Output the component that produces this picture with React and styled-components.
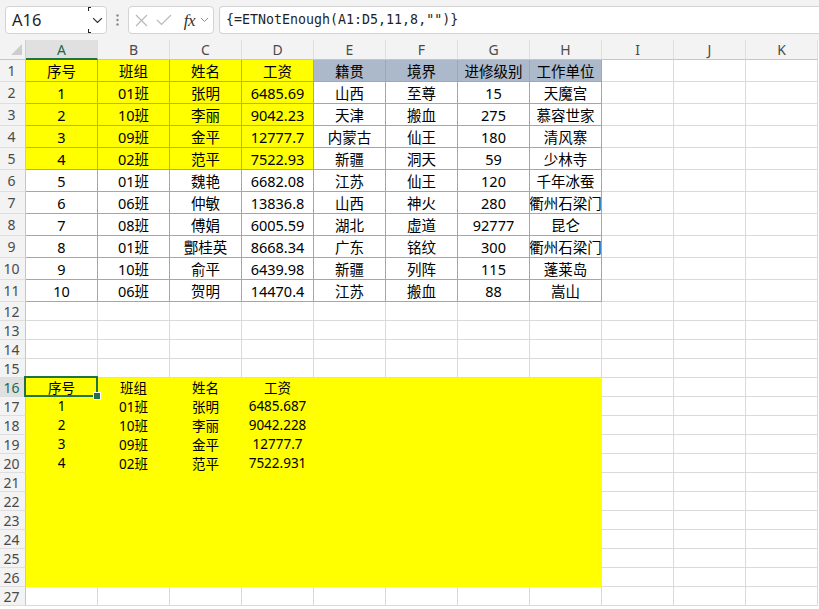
import React from "react";
import styled, { createGlobalStyle } from "styled-components";

const GRID = "#dadada";
const TABLE = "#a6a6a6";
const YELLOW = "#ffff00";
const STEEL = "#acb9ca";
const GREEN = "#217346";

const GlobalStyle = createGlobalStyle`
  html, body {
    margin: 0;
    padding: 0;
    background: #ffffff;
  }
  body {
    font-family: "Noto Sans", "Noto Sans CJK SC", sans-serif;
    overflow: hidden;
  }
`;

const Page = styled.div`
  width: 819px;
  height: 609px;
  overflow: hidden;
  background: #ffffff;
`;

/* ---------- formula bar ---------- */

const Toolbar = styled.div`
  display: flex;
  align-items: flex-start;
  height: 40px;
  box-sizing: border-box;
  padding: 6px 0 0 5px;
  background: #f3f3f3;
`;

const NameBox = styled.div`
  display: flex;
  width: 102px;
  height: 28px;
  box-sizing: border-box;
  border: 1px solid #d3d3d3;
  border-radius: 4px;
  background: #ffffff;
`;

const NameText = styled.div`
  flex: 1;
  padding-left: 6px;
  font-size: 16.5px;
  line-height: 26px;
  color: #1f1f1f;
`;

const DropButton = styled.div`
  position: relative;
  width: 18px;
  display: flex;
  align-items: center;
  justify-content: center;

  &::before,
  &::after {
    content: "";
    position: absolute;
    left: 0;
    width: 2px;
    height: 3px;
    border-left: 1px solid #222;
  }
  &::before {
    top: 0;
    border-top: 1px solid #222;
  }
  &::after {
    bottom: 0;
    border-bottom: 1px solid #222;
  }
`;

const Dots = styled.div`
  width: 21px;
  height: 28px;
  display: flex;
  align-items: center;
  justify-content: center;
`;

const FuncBox = styled.div`
  display: flex;
  align-items: center;
  width: 86px;
  height: 28px;
  box-sizing: border-box;
  padding-left: 5px;
  border: 1px solid #d3d3d3;
  border-radius: 4px;
  background: #ffffff;
`;

const IconSlot = styled.div`
  width: ${(p) => p.$w}px;
  margin-right: ${(p) => p.$gap || 0}px;
  display: flex;
  align-items: center;
  justify-content: center;
`;

const Fx = styled.span`
  font-family: "Liberation Serif", "DejaVu Serif", serif;
  font-style: italic;
  font-size: 17px;
  color: #333;
  line-height: 1;
  letter-spacing: -0.5px;
`;

const FormulaBox = styled.div`
  flex: 1;
  height: 28px;
  margin-left: 5px;
  box-sizing: border-box;
  padding-left: 6px;
  border: 1px solid #d3d3d3;
  border-right: none;
  border-radius: 4px 0 0 4px;
  background: #ffffff;
  font-family: "DejaVu Sans Mono", "Liberation Mono", monospace;
  font-size: 13.3px;
  line-height: 26px;
  color: #1f1f1f;
  white-space: nowrap;
`;

/* ---------- sheet ---------- */

const Sheet = styled.div`
  display: grid;
  grid-template-columns: 26px repeat(11, 72px);
  grid-template-rows: 20px repeat(11, 22px) repeat(16, 19px);
`;

const Corner = styled.div`
  position: relative;
  box-sizing: border-box;
  background: #f3f3f3;
  border-right: 1px solid #cfcfcf;
  border-bottom: 1px solid #c6c6c6;

  &::after {
    content: "";
    position: absolute;
    right: 3px;
    bottom: 4px;
    width: 0;
    height: 0;
    border-left: 11px solid transparent;
    border-bottom: 11px solid #cdcdcd;
  }
`;

const ColHead = styled.div`
  box-sizing: border-box;
  display: flex;
  align-items: center;
  justify-content: center;
  background: ${(p) => (p.$active ? "#e0e0e0" : "#f3f3f3")};
  border-right: 1px solid #dedede;
  border-bottom: ${(p) => (p.$active ? `2px solid ${GREEN}` : "1px solid #c6c6c6")};
  color: ${(p) => (p.$active ? "#1b6a4a" : "#4a4a4a")};
  font-size: 14px;
  padding-top: ${(p) => (p.$active ? 1 : 0)}px;
`;

const RowHead = styled.div`
  box-sizing: border-box;
  display: flex;
  align-items: center;
  justify-content: center;
  padding-right: 2px;
  background: ${(p) => (p.$active ? "#e0e0e0" : "#f3f3f3")};
  border-right: 1px solid #c6c6c6;
  border-bottom: 1px solid #dedede;
  color: ${(p) => (p.$active ? "#1b6a4a" : "#4a4a4a")};
  font-size: 14px;
`;

const Cell = styled.div`
  position: relative;
  box-sizing: border-box;
  display: flex;
  align-items: center;
  justify-content: center;
  white-space: nowrap;
  overflow: ${(p) => (p.$active ? "visible" : "hidden")};
  background: ${(p) => p.$fill || "#ffffff"};
  border-right: 1px solid ${(p) => p.$line};
  border-bottom: 1px solid ${(p) => p.$line};
  color: #000;
  font-size: ${(p) => (p.$small ? 13.5 : 14.5)}px;
`;

const Selection = styled.span`
  position: absolute;
  top: -2px;
  left: -2px;
  right: -1px;
  bottom: -1px;
  border: 2px solid ${GREEN};
  z-index: 2;
  pointer-events: none;
`;

const Handle = styled.span`
  position: absolute;
  right: -5px;
  bottom: -5px;
  width: 6px;
  height: 6px;
  background: ${GREEN};
  border: 1px solid #ffffff;
`;

/* ---------- data ---------- */

const COLS = ["A", "B", "C", "D", "E", "F", "G", "H", "I", "J", "K"];

const table = [
  ["序号", "班组", "姓名", "工资", "籍贯", "境界", "进修级别", "工作单位"],
  ["1", "01班", "张明", "6485.69", "山西", "至尊", "15", "天魔宫"],
  ["2", "10班", "李丽", "9042.23", "天津", "搬血", "275", "慕容世家"],
  ["3", "09班", "金平", "12777.7", "内蒙古", "仙王", "180", "清风寨"],
  ["4", "02班", "范平", "7522.93", "新疆", "洞天", "59", "少林寺"],
  ["5", "01班", "魏艳", "6682.08", "江苏", "仙王", "120", "千年冰蚕"],
  ["6", "06班", "仲敏", "13836.8", "山西", "神火", "280", "衢州石梁门"],
  ["7", "08班", "傅娟", "6005.59", "湖北", "虚道", "92777", "昆仑"],
  ["8", "01班", "酆桂英", "8668.34", "广东", "铭纹", "300", "衢州石梁门"],
  ["9", "10班", "俞平", "6439.98", "新疆", "列阵", "115", "蓬莱岛"],
  ["10", "06班", "贺明", "14470.4", "江苏", "搬血", "88", "嵩山"],
];

const result = [
  ["序号", "班组", "姓名", "工资"],
  ["1", "01班", "张明", "6485.687"],
  ["2", "10班", "李丽", "9042.228"],
  ["3", "09班", "金平", "12777.7"],
  ["4", "02班", "范平", "7522.931"],
];

function cellInfo(row, col) {
  // row is 1-based sheet row, col is 0-based column index
  if (row <= 11 && col < 8) {
    let fill;
    if (row <= 5 && col < 4) fill = YELLOW;
    if (row === 1 && col >= 4) fill = STEEL;
    return { text: table[row - 1][col], fill, line: TABLE };
  }
  if (row >= 16 && row <= 26 && col < 8) {
    const r = result[row - 16];
    return {
      text: r && col < 4 ? r[col] : "",
      fill: YELLOW,
      line: YELLOW,
      small: true,
    };
  }
  return { text: "", line: GRID };
}

const Chevron = ({ size = 10, color = "#444" }) => (
  <svg width={size} height={size * 0.6} viewBox="0 0 10 6">
    <polyline points="1,1 5,5 9,1" fill="none" stroke={color} strokeWidth="1.1" />
  </svg>
);

const App = () => {
  const rows = [];
  for (let r = 1; r <= 27; r++) {
    rows.push(
      <RowHead key={`h${r}`} $active={r === 16}>
        {r}
      </RowHead>
    );
    COLS.forEach((c, i) => {
      const info = cellInfo(r, i);
      const active = r === 16 && i === 0;
      rows.push(
        <Cell
          key={`${c}${r}`}
          $fill={info.fill}
          $line={info.line}
          $small={info.small}
          $active={active}
        >
          {info.text}
          {active && (
            <Selection>
              <Handle />
            </Selection>
          )}
        </Cell>
      );
    });
  }

  return (
    <Page>
      <GlobalStyle />
      <Toolbar>
        <NameBox>
          <NameText>A16</NameText>
          <DropButton>
            <Chevron size={11} color="#333" />
          </DropButton>
        </NameBox>
        <Dots>
          <svg width="3" height="12" viewBox="0 0 3 12">
            <circle cx="1.5" cy="1.5" r="1.2" fill="#8a8a8a" />
            <circle cx="1.5" cy="6" r="1.2" fill="#8a8a8a" />
            <circle cx="1.5" cy="10.5" r="1.2" fill="#8a8a8a" />
          </svg>
        </Dots>
        <FuncBox>
          <IconSlot $w={14} $gap={8}>
            <svg width="13" height="13" viewBox="0 0 13 13">
              <path d="M1 1 L12 12 M12 1 L1 12" stroke="#b9b9b9" strokeWidth="1.2" />
            </svg>
          </IconSlot>
          <IconSlot $w={16} $gap={10}>
            <svg width="16" height="12" viewBox="0 0 16 12">
              <polyline points="1,6 5.5,10.5 15,1" fill="none" stroke="#b9b9b9" strokeWidth="1.2" />
            </svg>
          </IconSlot>
          <IconSlot $w={15} $gap={2}>
            <Fx>fx</Fx>
          </IconSlot>
          <IconSlot $w={10}>
            <Chevron size={9} color="#8a8a8a" />
          </IconSlot>
        </FuncBox>
        <FormulaBox>{'{=ETNotEnough(A1:D5,11,8,"")}'}</FormulaBox>
      </Toolbar>
      <Sheet>
        <Corner />
        {COLS.map((c, i) => (
          <ColHead key={c} $active={i === 0}>
            {c}
          </ColHead>
        ))}
        {rows}
      </Sheet>
    </Page>
  );
};

export default App;
